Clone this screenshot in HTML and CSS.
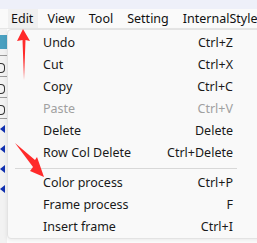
FILE: index.html
```html
<!DOCTYPE html>
<html>
<head>
<meta charset="utf-8">
<link rel="stylesheet" href="styles.css">
</head>
<body>
<div class="app">
  <div class="titlebar"></div>
  <div class="menubar">
    <span class="mi active">Edit</span>
    <span class="mi">View</span>
    <span class="mi">Tool</span>
    <span class="mi">Setting</span>
    <span class="mi">InternalStyle</span>
  </div>
  <div class="content">
    <div class="side">
      <div class="blk teal"></div>
      <div class="ln"></div>
      <div class="blk mark"></div>
      <div class="ln"></div>
      <div class="blk mark"></div>
      <div class="ln"></div>
      <div class="blk mark"></div>
      <div class="ln"></div>
      <div class="blk ico"></div>
      <div class="blk ico"></div>
      <div class="blk ico"></div>
      <div class="blk ico"></div>
    </div>
    <div class="main"></div>
  </div>
  <div class="dropdown">
    <div class="item"><span>Undo</span><span>Ctrl+Z</span></div>
    <div class="item"><span>Cut</span><span>Ctrl+X</span></div>
    <div class="item"><span>Copy</span><span>Ctrl+C</span></div>
    <div class="item disabled"><span>Paste</span><span>Ctrl+V</span></div>
    <div class="item"><span>Delete</span><span>Delete</span></div>
    <div class="item"><span>Row Col Delete</span><span>Ctrl+Delete</span></div>
    <div class="sep"></div>
    <div class="item"><span>Color process</span><span>Ctrl+P</span></div>
    <div class="item"><span>Frame process</span><span>F</span></div>
    <div class="item"><span>Insert frame</span><span>Ctrl+I</span></div>
  </div>
  <svg class="arrow" width="257" height="243" viewBox="0 0 257 243">
    <polygon points="23,29 30,41 25.5,40 24,80 22.5,40 17,41" fill="#ff2a2a"/>
    <polygon points="15,143 35,160 37,157 44,177 30,171 33,167 15,143" fill="#ff2a2a"/>
  </svg>
</div>
</body>
</html>
```
FILE: styles.css
```css
html, body {
  margin: 0;
  padding: 0;
  background: #ffffff;
}
.app {
  position: relative;
  width: 257px;
  height: 243px;
  overflow: hidden;
  font-family: "Noto Sans", "Open Sans", sans-serif;
  font-size: 12px;
  color: #000;
}
.titlebar {
  height: 9px;
  background: #eef0f9;
}
.menubar {
  height: 19px;
  background: #fafafa;
  display: flex;
  align-items: center;
  padding-left: 8px;
  border-bottom: 1px solid #e6e6e6;
  font-size: 12.5px;
}
.mi {
  padding: 0 3px;
  margin-right: 8px;
  line-height: 19px;
  white-space: nowrap;
  color: #111;
}
.mi.active {
  background: #f0f0f0;
  padding: 0 5px 0 3px;
  margin-right: 6px;
}
.content {
  display: flex;
  height: 214px;
}
.side {
  width: 7px;
  background: #f2f2f2;
  display: flex;
  flex-direction: column;
  padding-top: 6px;
}
.main {
  flex: 1;
  background: #ffffff;
}
.blk {
  height: 20px;
  position: relative;
}
.teal {
  height: 14px;
  background: #4aa0c0;
  margin-bottom: 6px;
}
.ln {
  height: 1px;
  background: #9a9a9a;
}
.mark::after {
  content: "";
  position: absolute;
  left: 0;
  top: 7px;
  width: 4px;
  height: 8px;
  border: 1.5px solid #333;
  border-left: none;
  border-radius: 0 4px 4px 0;
}
.ico::after {
  content: "";
  position: absolute;
  left: 0;
  top: 6px;
  width: 0;
  height: 0;
  border-top: 4px solid transparent;
  border-bottom: 4px solid transparent;
  border-right: 5px solid #1030b0;
}
.dropdown {
  position: absolute;
  left: 7px;
  top: 29px;
  width: 270px;
  height: 210px;
  background: #f9f9f9;
  border: 1px solid #e3e3e3;
  border-radius: 4px;
  box-sizing: border-box;
  padding-top: 2px;
  box-shadow: 0 2px 4px rgba(0,0,0,0.08);
}
.item {
  display: flex;
  justify-content: space-between;
  height: 22px;
  line-height: 22px;
  padding-left: 35px;
  width: 225px;
  box-sizing: border-box;
  color: #1a1a1a;
  font-size: 12.5px;
}
.item.disabled {
  color: #a0a0a0;
}
.sep {
  height: 1px;
  background: #d8d8d8;
  margin: 4px 0 3px 7px;
  width: 222px;
}
.arrow {
  position: absolute;
  left: 0;
  top: 0;
}
```
